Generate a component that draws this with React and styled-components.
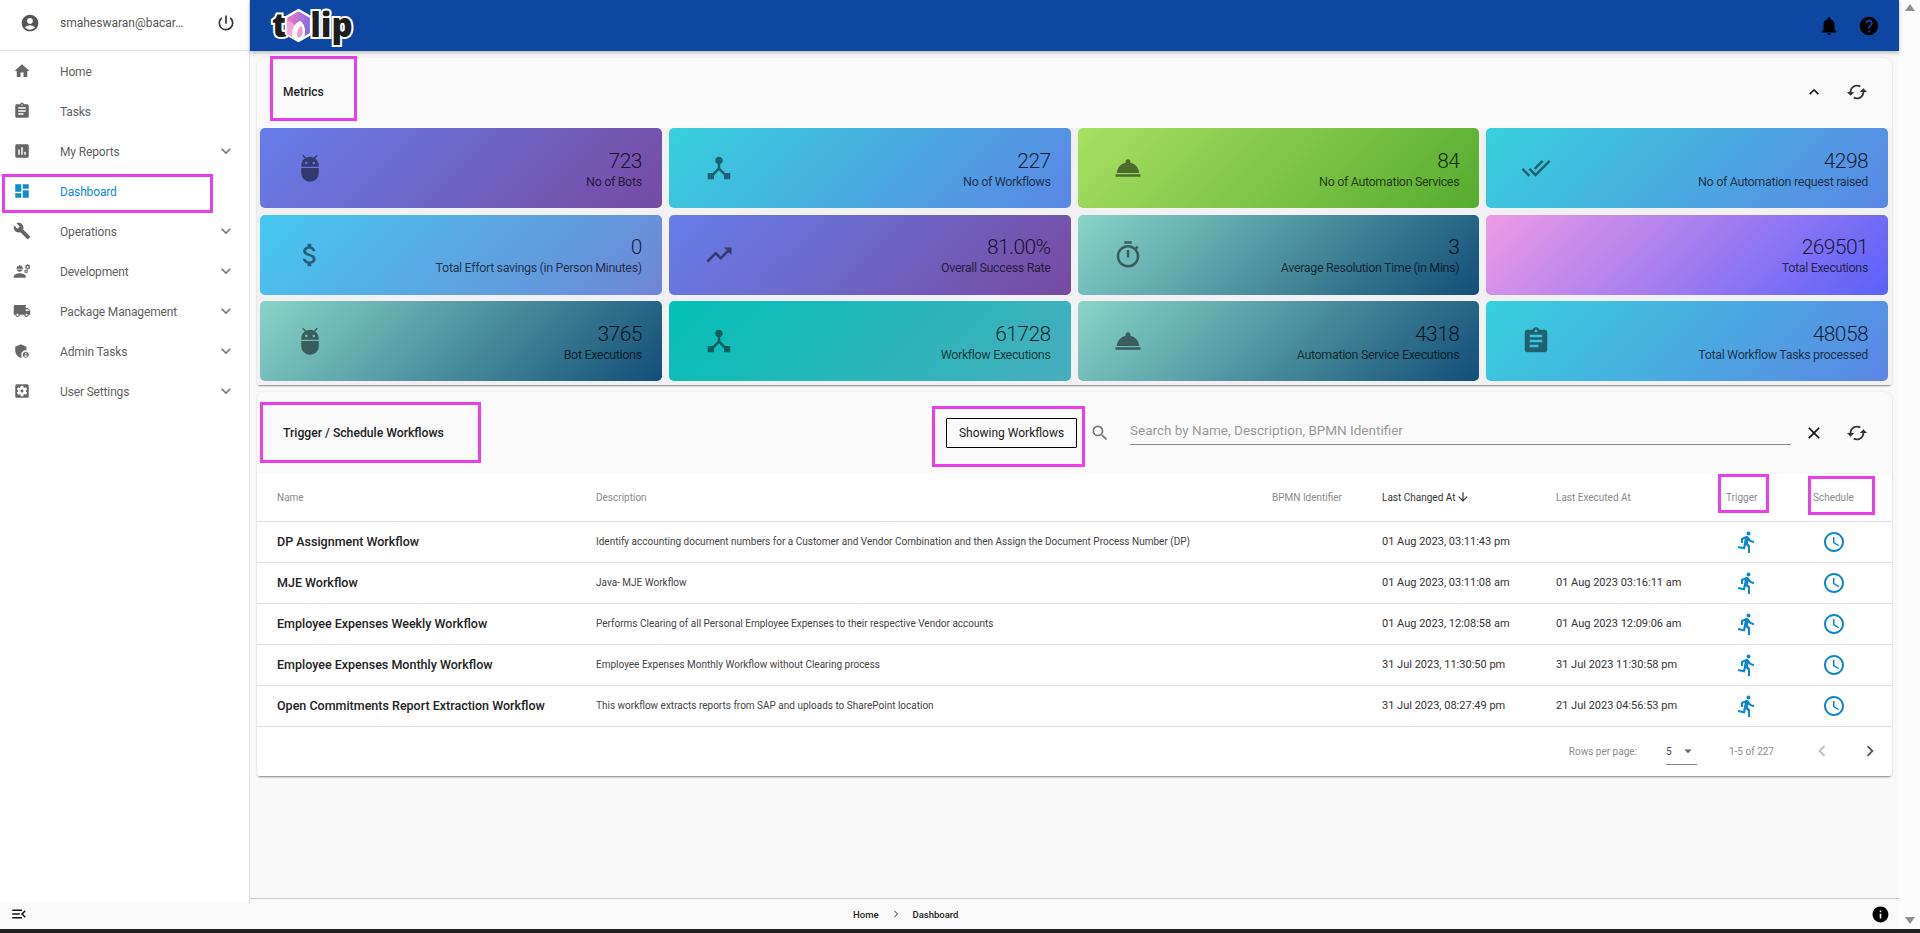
import React from 'react'
import styled, { createGlobalStyle } from 'styled-components'
import {
  MdAccessTime,
  MdAccountCircle,
  MdAdb,
  MdAdminPanelSettings,
  MdArrowDownward,
  MdArrowDropDown,
  MdAssessment,
  MdAssignment,
  MdAttachMoney,
  MdBuild,
  MdChevronLeft,
  MdChevronRight,
  MdClose,
  MdDashboard,
  MdDeviceHub,
  MdDirectionsRun,
  MdDoneAll,
  MdEngineering,
  MdExpandLess,
  MdExpandMore,
  MdHelp,
  MdHome,
  MdInfo,
  MdLocalShipping,
  MdMenuOpen,
  MdNotifications,
  MdOutlineTimer,
  MdPowerSettingsNew,
  MdRoomService,
  MdSearch,
  MdSettingsApplications,
  MdSync,
  MdTrendingUp
} from 'react-icons/md'

const gradients = {
  purple: 'linear-gradient(135deg, #667eea, #764ba2)',
  teal: 'linear-gradient(135deg, #36d1dc, #5b86e5)',
  green: 'linear-gradient(135deg, #a8e063, #56ab2f)',
  sky: 'linear-gradient(135deg, #45c8f1, #6f86d6)',
  deep: 'linear-gradient(135deg, #89d4c6, #134e78)',
  pink: 'linear-gradient(135deg, #ee9ae5, #5961f9)',
  mint: 'linear-gradient(135deg, #03c0b6, #48adbd)'
}

const navItems = [
  { label: 'Home', icon: MdHome },
  { label: 'Tasks', icon: MdAssignment },
  { label: 'My Reports', icon: MdAssessment, more: true },
  { label: 'Dashboard', icon: MdDashboard, active: true },
  { label: 'Operations', icon: MdBuild, more: true },
  { label: 'Development', icon: MdEngineering, more: true },
  { label: 'Package Management', icon: MdLocalShipping, more: true },
  { label: 'Admin Tasks', icon: MdAdminPanelSettings, more: true },
  { label: 'User Settings', icon: MdSettingsApplications, more: true }
]

const metrics = [
  { value: '723', label: 'No of Bots', icon: MdAdb, bg: 'purple' },
  { value: '227', label: 'No of Workflows', icon: MdDeviceHub, bg: 'teal' },
  { value: '84', label: 'No of Automation Services', icon: MdRoomService, bg: 'green' },
  { value: '4298', label: 'No of Automation request raised', icon: MdDoneAll, bg: 'teal' },
  { value: '0', label: 'Total Effort savings (in Person Minutes)', icon: MdAttachMoney, bg: 'sky' },
  { value: '81.00%', label: 'Overall Success Rate', icon: MdTrendingUp, bg: 'purple' },
  { value: '3', label: 'Average Resolution Time (in Mins)', icon: MdOutlineTimer, bg: 'deep' },
  { value: '269501', label: 'Total Executions', bg: 'pink' },
  { value: '3765', label: 'Bot Executions', icon: MdAdb, bg: 'deep' },
  { value: '61728', label: 'Workflow Executions', icon: MdDeviceHub, bg: 'mint' },
  { value: '4318', label: 'Automation Service Executions', icon: MdRoomService, bg: 'deep' },
  { value: '48058', label: 'Total Workflow Tasks processed', icon: MdAssignment, bg: 'teal' }
]

const workflows = [
  {
    name: 'DP Assignment Workflow',
    description:
      'Identify accounting document numbers for a Customer and Vendor Combination and then Assign the Document Process Number (DP)',
    changed: '01 Aug 2023, 03:11:43 pm',
    executed: ''
  },
  {
    name: 'MJE Workflow',
    description: 'Java- MJE Workflow',
    changed: '01 Aug 2023, 03:11:08 am',
    executed: '01 Aug 2023 03:16:11 am'
  },
  {
    name: 'Employee Expenses Weekly Workflow',
    description: 'Performs Clearing of all Personal Employee Expenses to their respective Vendor accounts',
    changed: '01 Aug 2023, 12:08:58 am',
    executed: '01 Aug 2023 12:09:06 am'
  },
  {
    name: 'Employee Expenses Monthly Workflow',
    description: 'Employee Expenses Monthly Workflow without Clearing process',
    changed: '31 Jul 2023, 11:30:50 pm',
    executed: '31 Jul 2023 11:30:58 pm'
  },
  {
    name: 'Open Commitments Report Extraction Workflow',
    description: 'This workflow extracts reports from SAP and uploads to SharePoint location',
    changed: '31 Jul 2023, 08:27:49 pm',
    executed: '21 Jul 2023 04:56:53 pm'
  }
]

// magenta review boxes drawn over the screenshot
const highlights = [
  { x: 270, y: 56, w: 87, h: 65 },
  { x: 2, y: 174, w: 211, h: 39 },
  { x: 260, y: 402, w: 221, h: 61 },
  { x: 932, y: 406, w: 153, h: 61 },
  { x: 1718, y: 474, w: 51, h: 39 },
  { x: 1808, y: 476, w: 67, h: 39 }
]

export default function App() {
  return (
    <Page>
      <GlobalStyle />
      <Shell>
        <Column>
          <Upper>
            <Sidebar>
              <UserRow>
                <UserIcon />
                <UserName>smaheswaran@bacar…</UserName>
                <PowerIcon />
              </UserRow>
              {navItems.map(item => (
                <NavRow key={item.label} $active={item.active}>
                  <NavIcon $active={item.active}>
                    <item.icon />
                  </NavIcon>
                  <NavLabel>{item.label}</NavLabel>
                  {item.more && <NavChevron />}
                </NavRow>
              ))}
            </Sidebar>
            <Content>
              <TopBar>
                <Logo>
                  <LogoText>t</LogoText>
                  <LogoMark viewBox="0 0 30 36">
                    <defs>
                      <linearGradient id="hexTop" x1="0" y1="0.2" x2="1" y2="0.5">
                        <stop offset="0" stopColor="#f07cc0" />
                        <stop offset="1" stopColor="#7f6be6" />
                      </linearGradient>
                    </defs>
                    <path
                      d="M15 2 28 9.5v17L15 34 2 26.5V9.5z"
                      fill="url(#hexTop)"
                      stroke="#fff"
                      strokeWidth="2.5"
                      strokeLinejoin="round"
                    />
                    <path d="M3 13c3 0 6 2 8 5v14l-8-5z" fill="#f4a6d6" />
                    <path d="M9 31c-2-8 1-15 8-18 4 4 6 9 4 16l-6 4z" fill="#fff" />
                    <path d="M14 31c-1-6 0-10 4-13 2 4 2 8 0 11z" fill="#f09ad2" />
                  </LogoMark>
                  <LogoText $tail>lip</LogoText>
                </Logo>
                <TopActions>
                  <BarIcon as={MdNotifications} />
                  <BarIcon as={MdHelp} />
                </TopActions>
              </TopBar>
              <Main>
                <Panel>
                  <MetricsHead>
                    <PanelTitle>Metrics</PanelTitle>
                    <ToolGroup>
                      <ToolIcon as={MdExpandLess} />
                      <SyncIcon />
                    </ToolGroup>
                  </MetricsHead>
                  <MetricGrid>
                    {metrics.map(metric => (
                      <MetricCard key={metric.label} $bg={metric.bg}>
                        <MetricIcon>{metric.icon && <metric.icon />}</MetricIcon>
                        <MetricText>
                          <MetricValue>{metric.value}</MetricValue>
                          <MetricLabel>{metric.label}</MetricLabel>
                        </MetricText>
                      </MetricCard>
                    ))}
                  </MetricGrid>
                </Panel>
                <Panel>
                  <TableHead>
                    <TableTitle>Trigger / Schedule Workflows</TableTitle>
                    <ShowingButton>Showing Workflows</ShowingButton>
                    <SearchIcon />
                    <SearchInput placeholder="Search by Name, Description, BPMN Identifier" />
                    <ToolGroup>
                      <ToolIcon as={MdClose} />
                      <SyncIcon />
                    </ToolGroup>
                  </TableHead>
                  <Table>
                    <colgroup>
                      <col width="319" />
                      <col width="676" />
                      <col width="110" />
                      <col width="174" />
                      <col width="170" />
                      <col width="87" />
                      <col width="99" />
                    </colgroup>
                    <thead>
                      <tr>
                        <HeadCell>Name</HeadCell>
                        <HeadCell>Description</HeadCell>
                        <HeadCell>BPMN Identifier</HeadCell>
                        <HeadCell $sorted>
                          Last Changed At
                          <SortIcon />
                        </HeadCell>
                        <HeadCell>Last Executed At</HeadCell>
                        <HeadCell>Trigger</HeadCell>
                        <HeadCell>Schedule</HeadCell>
                      </tr>
                    </thead>
                    <tbody>
                      {workflows.map(row => (
                        <tr key={row.name}>
                          <NameCell>{row.name}</NameCell>
                          <DescriptionCell>{row.description}</DescriptionCell>
                          <DateCell />
                          <DateCell>{row.changed}</DateCell>
                          <DateCell>{row.executed}</DateCell>
                          <DateCell>
                            <RunIcon />
                          </DateCell>
                          <DateCell>
                            <ClockIcon />
                          </DateCell>
                        </tr>
                      ))}
                    </tbody>
                  </Table>
                  <Pagination>
                    <PageText>Rows per page:</PageText>
                    <PageSelect>
                      5
                      <MdArrowDropDown />
                    </PageSelect>
                    <PageText>1-5 of 227</PageText>
                    <PageArrow as={MdChevronLeft} $disabled />
                    <PageArrow as={MdChevronRight} />
                  </Pagination>
                </Panel>
              </Main>
            </Content>
          </Upper>
          <Footer>
            <MenuIcon />
            <Breadcrumb>
              Home
              <CrumbArrow />
              Dashboard
            </Breadcrumb>
            <InfoIcon />
          </Footer>
        </Column>
        <Scrollbar>
          <ScrollArrow />
          <ScrollArrow $down />
        </Scrollbar>
      </Shell>
      <BottomEdge />
      {highlights.map(box => (
        <Highlight key={box.x} $x={box.x} $y={box.y} $w={box.w} $h={box.h} />
      ))}
    </Page>
  )
}

const GlobalStyle = createGlobalStyle`
  html, body {
    margin: 0;
    padding: 0;
    overflow: hidden;
    background: #fafafa;
    font-family: Roboto, "Liberation Sans", sans-serif;
  }
`

const Page = styled.div`
  position: relative;
  width: 1920px;
  height: 933px;
  overflow: hidden;
`

const Highlight = styled.div`
  position: absolute;
  left: ${p => p.$x}px;
  top: ${p => p.$y}px;
  width: ${p => p.$w}px;
  height: ${p => p.$h}px;
  box-sizing: border-box;
  border: 3px solid #e93fe9;
`

const Shell = styled.div`
  display: flex;
  height: 929px;
`

const BottomEdge = styled.div`
  height: 4px;
  background: #222;
`

const Column = styled.div`
  display: flex;
  flex-direction: column;
  flex: 1;
  min-width: 0;
`

const Upper = styled.div`
  display: flex;
  height: 903px;
`

const Sidebar = styled.aside`
  box-sizing: border-box;
  flex: 0 0 250px;
  background: #fff;
  border-right: 1px solid #e0e0e0;
`

const UserRow = styled.div`
  box-sizing: border-box;
  display: flex;
  align-items: center;
  height: 51px;
  padding: 0 13px 5px 20px;
  border-bottom: 1px solid #e0e0e0;
`

const UserIcon = styled(MdAccountCircle)`
  flex: none;
  width: 20px;
  height: 20px;
  color: #555;
`

const UserName = styled.span`
  margin-left: 20px;
  color: #555;
  font-size: 12px;
  white-space: nowrap;
`

const PowerIcon = styled(MdPowerSettingsNew)`
  flex: none;
  width: 20px;
  height: 20px;
  margin-left: auto;
  color: #333;
`

const NavRow = styled.div`
  display: flex;
  align-items: center;
  height: 40px;
  padding: 0 13px;
  color: ${p => (p.$active ? '#0d8ad0' : '#5f5f5f')};
`

const NavIcon = styled.span`
  display: flex;
  flex: none;
  width: 47px;
  font-size: 18px;
  color: ${p => (p.$active ? '#0d8ad0' : '#666')};
`

const NavLabel = styled.span`
  padding-top: 1px;
  font-size: 12px;
  letter-spacing: -0.15px;
`

const NavChevron = styled(MdExpandMore)`
  width: 20px;
  height: 20px;
  margin-left: auto;
  color: #777;
`

const Content = styled.div`
  display: flex;
  flex-direction: column;
  flex: 1;
  min-width: 0;
`

const TopBar = styled.header`
  position: relative;
  z-index: 1;
  flex: none;
  display: flex;
  align-items: center;
  justify-content: space-between;
  height: 51px;
  padding: 0 19px 0 22px;
  background: #0d47a1;
  box-shadow: 0 2px 4px rgba(0, 0, 0, 0.25);
`

const Logo = styled.div`
  display: flex;
  align-items: center;
  height: 51px;
`

const LogoText = styled.span`
  margin-left: ${p => (p.$tail ? '-3px' : '0')};
  margin-top: -3px;
  color: #1d1d1d;
  font-family: "Open Sans", sans-serif;
  font-size: 33px;
  font-weight: 800;
  -webkit-text-stroke: 4px #fff;
  paint-order: stroke fill;
`

const LogoMark = styled.svg`
  position: relative;
  z-index: 1;
  flex: none;
  width: 29px;
  height: 35px;
  margin-left: -3px;
`

const TopActions = styled.div`
  display: flex;
  align-items: center;
  gap: 18px;
`

const BarIcon = styled.svg`
  width: 22px;
  height: 22px;
  color: #000;
`

const Main = styled.main`
  flex: 1;
  display: flex;
  flex-direction: column;
  gap: 7px;
  margin-bottom: 4px;
  padding: 7px 7px 0;
  background: #f9f9f9;
  border-bottom: 1px solid #ccc;
`

const Panel = styled.section`
  overflow: hidden;
  background: #fafafa;
  border-radius: 8px 8px 3px 3px;
  box-shadow: 0 2px 2px -1px rgba(0, 0, 0, 0.45), 0 0 3px rgba(0, 0, 0, 0.1);
`

const MetricsHead = styled.div`
  display: flex;
  align-items: center;
  box-sizing: border-box;
  height: 70px;
  padding: 0 24px 2px 26px;
`

const PanelTitle = styled.h2`
  flex: 1;
  margin: 0;
  color: #222;
  font-size: 12px;
  font-weight: 500;
`

const ToolGroup = styled.div`
  flex: none;
  display: flex;
  align-items: center;
  gap: 22px;
`

const ToolIcon = styled.svg`
  width: 20px;
  height: 20px;
  color: #111;
`

const SyncIcon = styled(MdSync)`
  width: 22px;
  height: 22px;
  color: #333;
  transform: rotate(90deg);
`

const MetricGrid = styled.div`
  display: grid;
  grid-template-columns: repeat(4, 1fr);
  grid-auto-rows: 80px;
  gap: 6.5px 7px;
  padding: 0 4px 4px 3px;
  background: #f1f1f4;
`

const MetricCard = styled.div`
  display: flex;
  align-items: center;
  justify-content: space-between;
  padding: 0 20px 0 35px;
  background: ${p => gradients[p.$bg]};
  border-radius: 5px;
`

const MetricIcon = styled.span`
  display: flex;
  width: 30px;
  font-size: 30px;
  color: rgba(0, 0, 0, 0.5);
`

const MetricText = styled.div`
  padding-top: 3px;
  text-align: right;
  color: rgba(0, 0, 0, 0.7);
`

const MetricValue = styled.div`
  font-size: 21px;
  font-weight: 300;
  letter-spacing: -0.6px;
  line-height: 24px;
  color: rgba(0, 0, 0, 0.8);
`

const MetricLabel = styled.div`
  font-size: 12.5px;
  letter-spacing: -0.35px;
  line-height: 18px;
`

const TableHead = styled.div`
  display: flex;
  align-items: center;
  height: 82px;
  padding: 0 24px 0 26px;
`

const TableTitle = styled.h2`
  flex: 0 0 663px;
  margin: 0;
  color: #222;
  font-size: 12.2px;
  font-weight: 500;
`

const ShowingButton = styled.button`
  box-sizing: border-box;
  flex: none;
  width: 131px;
  height: 30px;
  padding: 0;
  color: #222;
  background: transparent;
  border: 1px solid #000;
  border-radius: 1px;
  font-family: inherit;
  font-size: 12px;
`

const SearchIcon = styled(MdSearch)`
  flex: none;
  width: 20px;
  height: 20px;
  margin-left: 13px;
  color: #777;
`

const SearchInput = styled.input`
  flex: 1;
  min-width: 0;
  box-sizing: border-box;
  height: 26px;
  margin: -2px 13px 0 20px;
  padding: 0 0 4px;
  background: transparent;
  border: 0;
  border-bottom: 1px solid #8a8a8a;
  outline: none;
  font-family: inherit;
  font-size: 13.5px;

  &::placeholder {
    color: #9a9a9a;
    opacity: 1;
  }
`

const Table = styled.table`
  width: 100%;
  table-layout: fixed;
  border-collapse: collapse;
  background: #fff;
`

const HeadCell = styled.th`
  box-sizing: border-box;
  height: 47px;
  padding: 0 0 0 20px;
  color: ${p => (p.$sorted ? '#333' : '#8a8a8a')};
  font-size: 10px;
  font-weight: 400;
  text-align: left;
  border-bottom: 1px solid #e0e0e0;
`

const SortIcon = styled(MdArrowDownward)`
  width: 14px;
  height: 14px;
  margin-left: 1px;
  vertical-align: -3px;
`

const BodyCell = styled.td`
  box-sizing: border-box;
  height: 41px;
  padding: 0 0 0 20px;
  white-space: nowrap;
  border-bottom: 1px solid #e0e0e0;
`

const NameCell = styled(BodyCell)`
  color: #222;
  font-size: 12.5px;
  font-weight: 500;
`

const DescriptionCell = styled(BodyCell)`
  color: #444;
  font-size: 10px;
`

const DateCell = styled(BodyCell)`
  color: #333;
  font-size: 11px;

  svg {
    display: block;
    margin-left: 9px;
    color: #0d86cb;
  }
`

const RunIcon = styled(MdDirectionsRun)`
  width: 24px;
  height: 24px;
`

const ClockIcon = styled(MdAccessTime)`
  width: 24px;
  height: 24px;
`

const Pagination = styled.div`
  display: flex;
  align-items: center;
  justify-content: flex-end;
  height: 49px;
  padding-right: 11px;
  background: #fff;
`

const PageText = styled.span`
  color: #8a8a8a;
  font-size: 10px;
`

const PageSelect = styled.span`
  box-sizing: border-box;
  display: flex;
  align-items: center;
  width: 31px;
  height: 27px;
  margin: 0 32px 0 29px;
  padding-top: 1px;
  color: #444;
  font-size: 10px;
  border-bottom: 1px solid #888;

  svg {
    width: 18px;
    height: 18px;
    margin-left: 7px;
    color: #666;
  }
`

const PageArrow = styled.svg`
  width: 22px;
  height: 22px;
  margin-left: ${p => (p.$disabled ? '37px' : '26px')};
  color: ${p => (p.$disabled ? '#bbb' : '#555')};
`

const Footer = styled.footer`
  display: flex;
  align-items: center;
  box-sizing: border-box;
  height: 26px;
  padding: 0 9px 4px 10px;
  background: #fafafa;
`

const MenuIcon = styled(MdMenuOpen)`
  width: 18px;
  height: 18px;
  color: #111;
`

const Breadcrumb = styled.nav`
  display: flex;
  align-items: center;
  margin-left: 825px;
  color: #222;
  font-size: 9.5px;
  font-weight: 500;
`

const CrumbArrow = styled(MdChevronRight)`
  width: 14px;
  height: 14px;
  margin: 0 10px;
  color: #777;
`

const InfoIcon = styled(MdInfo)`
  width: 19px;
  height: 19px;
  margin-left: auto;
  color: #000;
`

const Scrollbar = styled.div`
  flex: 0 0 21px;
  display: flex;
  flex-direction: column;
  justify-content: space-between;
  align-items: center;
  padding: 4px 0 5px;
  box-sizing: border-box;
  background: #fcfcfc;
`

const ScrollArrow = styled.span`
  width: 0;
  height: 0;
  border-left: 5.5px solid transparent;
  border-right: 5.5px solid transparent;
  border-top: ${p => (p.$down ? '7px solid #8f8f8f' : '0')};
  border-bottom: ${p => (p.$down ? '0' : '7px solid #8f8f8f')};
`
